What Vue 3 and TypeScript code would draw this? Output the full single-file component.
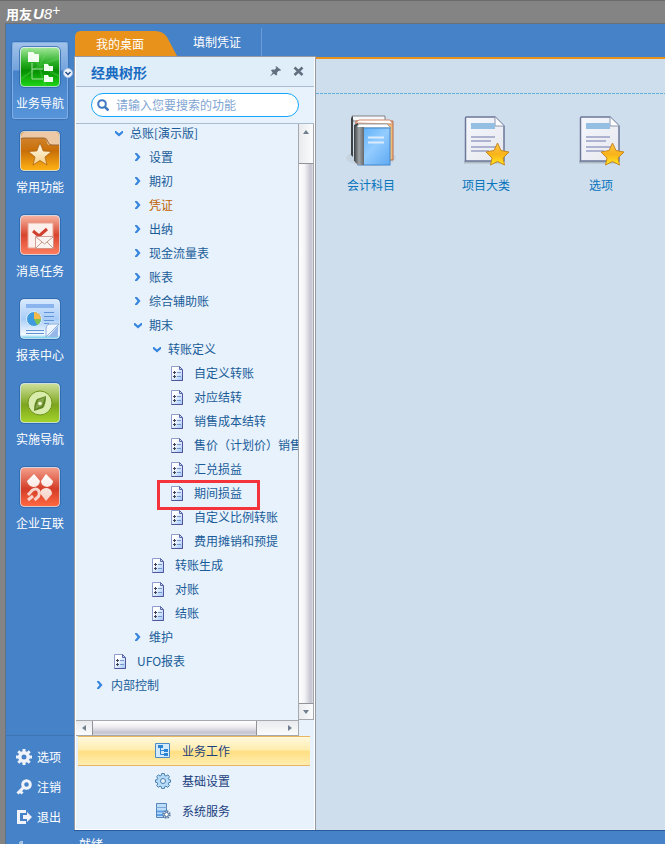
<script setup lang="ts">
import { ref } from 'vue'

interface NavItem { id: string; label: string }
interface TreeRow { label: string; level: number; kind: 'open' | 'closed' | 'leaf'; tone?: 'warm'; marked?: boolean }

const navItems: NavItem[] = [
  { id: 'business', label: '业务导航' },
  { id: 'common', label: '常用功能' },
  { id: 'message', label: '消息任务' },
  { id: 'report', label: '报表中心' },
  { id: 'guide', label: '实施导航' },
  { id: 'connect', label: '企业互联' },
]
const toolItems: NavItem[] = [
  { id: 'options', label: '选项' },
  { id: 'logoff', label: '注销' },
  { id: 'exit', label: '退出' },
]
const tabs = ['我的桌面', '填制凭证']
const rows: TreeRow[] = [
  { label: '总账[演示版]', level: 1, kind: 'open' },
  { label: '设置', level: 2, kind: 'closed' },
  { label: '期初', level: 2, kind: 'closed' },
  { label: '凭证', level: 2, kind: 'closed', tone: 'warm' },
  { label: '出纳', level: 2, kind: 'closed' },
  { label: '现金流量表', level: 2, kind: 'closed' },
  { label: '账表', level: 2, kind: 'closed' },
  { label: '综合辅助账', level: 2, kind: 'closed' },
  { label: '期末', level: 2, kind: 'open' },
  { label: '转账定义', level: 3, kind: 'open' },
  { label: '自定义转账', level: 4, kind: 'leaf' },
  { label: '对应结转', level: 4, kind: 'leaf' },
  { label: '销售成本结转', level: 4, kind: 'leaf' },
  { label: '售价（计划价）销售', level: 4, kind: 'leaf' },
  { label: '汇兑损益', level: 4, kind: 'leaf' },
  { label: '期间损益', level: 4, kind: 'leaf', marked: true },
  { label: '自定义比例转账', level: 4, kind: 'leaf' },
  { label: '费用摊销和预提', level: 4, kind: 'leaf' },
  { label: '转账生成', level: 3, kind: 'leaf' },
  { label: '对账', level: 3, kind: 'leaf' },
  { label: '结账', level: 3, kind: 'leaf' },
  { label: '维护', level: 2, kind: 'closed' },
  { label: 'UFO报表', level: 1, kind: 'leaf' },
  { label: '内部控制', level: 0, kind: 'closed' },
]
const sections: NavItem[] = [
  { id: 'work', label: '业务工作' },
  { id: 'base', label: '基础设置' },
  { id: 'service', label: '系统服务' },
]
const shortcuts = [
  { id: 'books', label: '会计科目' },
  { id: 'page', label: '项目大类' },
  { id: 'page', label: '选项' },
]

const activeNav = ref('business')
const activeTab = ref(0)
const activeSection = ref('work')
const query = ref('')
</script>

<template>
  <div class="window">
    <svg class="defs" aria-hidden="true">
      <defs>
        <linearGradient id="g-business" x2="0" y2="1"><stop offset="0" stop-color="#a5e89c" /><stop offset=".4" stop-color="#27ad22" /><stop offset=".6" stop-color="#078f04" /><stop offset="1" stop-color="#1fd616" /></linearGradient>
        <linearGradient id="g-common" x2="0" y2="1"><stop offset="0" stop-color="#d48b3c" /><stop offset=".5" stop-color="#c96f08" /><stop offset="1" stop-color="#ffb414" /></linearGradient>
        <linearGradient id="g-message" x2="0" y2="1"><stop offset="0" stop-color="#f7b5a2" /><stop offset=".5" stop-color="#d8452e" /><stop offset="1" stop-color="#ff7f60" /></linearGradient>
        <linearGradient id="g-report" x2="0" y2="1"><stop offset="0" stop-color="#d8e9fd" /><stop offset=".5" stop-color="#a9cdf8" /><stop offset=".9" stop-color="#f4fbff" /><stop offset="1" stop-color="#60c7e8" /></linearGradient>
        <linearGradient id="g-guide" x2="0" y2="1"><stop offset="0" stop-color="#cfe09c" /><stop offset=".55" stop-color="#7da51d" /><stop offset="1" stop-color="#a4d42b" /></linearGradient>
        <linearGradient id="g-connect" x2="0" y2="1"><stop offset="0" stop-color="#f4a18d" /><stop offset=".55" stop-color="#d43d27" /><stop offset="1" stop-color="#ff6941" /></linearGradient>
        <linearGradient id="g-white" x2="0" y2="1"><stop offset="0" stop-color="#fff" /><stop offset="1" stop-color="#f5cfc3" /></linearGradient>
        <linearGradient id="g-star" x2="0" y2="1"><stop offset="0" stop-color="#fffdf2" /><stop offset="1" stop-color="#f6cf85" /></linearGradient>
        <linearGradient id="g-gold" x2="0" y2="1"><stop offset="0" stop-color="#ffc94a" /><stop offset=".5" stop-color="#f9b21a" /><stop offset="1" stop-color="#ffe91e" /></linearGradient>
        <linearGradient id="g-sheet" x2="1" y2="1"><stop offset="0" stop-color="#f4f7fd" /><stop offset="1" stop-color="#e6e8ee" /></linearGradient>
        <linearGradient id="g-book" x2="1" y2="1"><stop offset="0" stop-color="#58adf7" /><stop offset=".5" stop-color="#93ccff" /><stop offset="1" stop-color="#5fa9f2" /></linearGradient>
        <linearGradient id="g-spine"><stop offset="0" stop-color="#4f5254" /><stop offset=".45" stop-color="#a1a4a6" /><stop offset="1" stop-color="#65686b" /></linearGradient>
        <linearGradient id="g-doc" x2="1" y2="1"><stop offset=".3" stop-color="#fff" /><stop offset="1" stop-color="#9dc6fa" /></linearGradient>
      </defs>
    </svg>

    <header class="titlebar">
      <span class="brand">用友</span><span class="brand-u">U</span><span class="brand-8">8</span><span class="brand-plus">+</span>
    </header>

    <div class="body">
      <aside class="sidebar">
        <nav class="nav">
          <button v-for="n in navItems" :key="n.id" type="button" class="nav-item" :class="{ active: activeNav === n.id }" @click="activeNav = n.id">
            <svg class="nav-icon" viewBox="0 0 42 42" aria-hidden="true">
              <rect x=".5" y=".5" width="41" height="41" rx="4.5" fill="none" stroke="#2b64a6" stroke-opacity=".7" />
              <rect x="1.5" y="1.5" width="39" height="39" rx="3.5" :fill="`url(#g-${n.id})`" stroke="#fff" stroke-opacity=".6" />
              <g v-if="n.id === 'business'">
                <path d="M20 20L10 2M20 20L30 2M20 20L40 12M20 20L40 30M20 20L26 40M20 20L2 33" stroke="#6de463" stroke-opacity=".25" stroke-width="2" />
                <path d="M13 17V33H24M13 23H24" fill="none" stroke="#a4dda0" />
                <path d="M9 6h5l2 2h4v8H9zM25 18h4l1 2h4v5h-9zM25 29h4l1 2h4v5h-9z" fill="#f2fff0" />
              </g>
              <g v-else-if="n.id === 'common'">
                <path d="M2 7q0-5 5-5h29q4 0 4 4v9h-9q-3 0-3-3-1-4-4-4H2z" fill="#edc9a6" />
                <path d="M2 9q1-1 3-1h20q3 0 4 4 1 3 4 3h7" fill="none" stroke="#9a6836" />
                <path d="M21 13l3.200 8 8.300.5-6.500 5.500 2 8-7-4.500-7 4.500 2-8-6.500-5.500 8.300-.5z" fill="url(#g-star)" stroke="#a65c0c" stroke-width=".7" />
              </g>
              <g v-else-if="n.id === 'message'">
                <path d="M9 9h25v25H9z" fill="#fdf0ec" stroke="#e8a291" />
                <path d="M14 17l6 5L28 15" fill="none" stroke="#d0402f" stroke-width="3" />
                <path d="M16.500 22.500h18v12h-18z" fill="#fbf3f0" stroke="#c8897b" stroke-width=".8" />
                <path d="M17 23l8.500 7 8.500-7M17 34l6-6m11 6-6-6" fill="none" stroke="#c59a90" />
              </g>
              <g v-else-if="n.id === 'report'">
                <path d="M7 6h28v4H7z" fill="#8ab4ee" />
                <circle cx="15" cy="21" r="7.5" fill="#3f9ae0" stroke="#dceefa" />
                <path d="M15 21v-7a7 7 0 0 1 7 7z" fill="#f6ba4a" /><path d="M15 21h7a7 7 0 0 1-4 6z" fill="#80c44f" />
                <path d="M25 14.500h10M25 18.500h10M25 22.500h10M25 25.500h5M7 32.500h18M7 35.500h18" stroke="#5f93d6" />
                <path d="M27 39V31q0-5 5-5h8z" fill="#eef5ff" stroke="#90afd8" />
                <path d="M39 28v11H29z" fill="#96b7e8" />
              </g>
              <g v-else-if="n.id === 'guide'">
                <circle cx="21" cy="21" r="12" fill="#d9ecab" stroke="#6e941d" />
                <path d="M27 14q0 8-3 12l-9 3q0-8 3-12z" fill="#5d8221" />
                <path d="M26 15l-7 3-3 9 7-3z" fill="#86a64a" /><circle cx="21" cy="21.500" r="1.800" fill="#eef8d0" />
              </g>
              <g v-else fill="url(#g-white)">
                <path d="M15 8l6 7q-1 6-7 6-5-1-6-6zM27 8l7 7q0 5-6 6-6-1-6-6zM27 35l-6-8q1-5 7-5 5 1 5 6z" />
                <path d="M9 29l4-4.500q4-3 6.500 0 2 4-1 7l-3 2.500" fill="none" stroke="#f8d5cc" stroke-width="3" />
                <path d="M9 34l5-4" stroke="#f8d5cc" stroke-width="3" />
              </g>
            </svg>
            <span class="nav-label">{{ n.label }}</span>
            <svg v-if="n.id === 'business'" class="nav-more" viewBox="0 0 10 10" aria-hidden="true"><circle cx="5" cy="5" r="4.5" fill="#eef4fc" stroke="#a4bee0" /><path d="M2.500 4L5 6.500 7.500 4" fill="none" stroke="#274f86" stroke-width="1.500" /></svg>
          </button>
        </nav>
        <div class="tools">
          <button v-for="t in toolItems" :key="t.id" type="button" class="tool">
            <svg class="tool-icon" viewBox="0 0 16 16" aria-hidden="true">
              <g v-if="t.id === 'options'"><circle cx="8" cy="8" r="4.2" fill="none" stroke="#f0f4fa" stroke-width="3.4" /><path d="M8 0v3M8 13v3M0 8h3M13 8h3M2.300 2.300l2 2M11.700 11.700l2 2M13.700 2.300l-2 2M4.300 11.700l-2 2" stroke="#f0f4fa" stroke-width="3" /></g>
              <g v-else-if="t.id === 'logoff'" fill="none" stroke="#f0f4fa" stroke-width="3"><circle cx="10.500" cy="5.500" r="3.800" /><path d="M7.500 8.500L1.500 14.500M3.500 11.500l3 3" /></g>
              <g v-else><path d="M10 2.500H2.500v11H10" fill="none" stroke="#f0f4fa" stroke-width="3" /><path d="M7 6h4V3l5 5-5 5v-3H7z" fill="#f0f4fa" /></g>
            </svg>
            <span>{{ t.label }}</span>
          </button>
        </div>
      </aside>

      <main class="main">
        <nav class="tabs">
          <button v-for="(t, i) in tabs" :key="t" type="button" class="tab" :class="{ current: activeTab === i }" @click="activeTab = i">{{ t }}</button>
        </nav>
        <div class="content">
          <section class="panel">
            <header class="panel-head">
              <h1 class="panel-title">经典树形</h1>
              <button type="button" class="head-button" aria-label="固定"><svg viewBox="0 0 11 11"><path d="M6 0l5 4-1 1-1-.5-2 2 .2 2-1 1L3.800 7.800 0 10.500l2.700-4L1 4.500l1-1 2.500.2 2-2L5.500 1z" fill="#61707f" /></svg></button>
              <button type="button" class="head-button" aria-label="关闭"><svg viewBox="0 0 11 11"><path d="M1.500 1.500l8 7.500M9.500 1.500l-8 7.500" stroke="#61707f" stroke-width="2.600" /></svg></button>
            </header>
            <div class="search-row">
              <label class="search">
                <svg class="search-icon" viewBox="0 0 12 12" aria-hidden="true"><circle cx="5" cy="5" r="3.8" fill="none" stroke="#3f77c0" stroke-width="2" /><path d="M8 8l3.500 3.500" stroke="#3f77c0" stroke-width="2.500" /></svg>
                <input v-model="query" type="text" class="search-input" placeholder="请输入您要搜索的功能" aria-label="搜索功能">
              </label>
            </div>

            <div class="tree-area">
              <ul class="tree">
                <li v-for="row in rows" :key="row.label" class="tree-row" :class="[`level-${row.level}`, { marked: row.marked }]">
                  <button type="button" class="tree-button" :class="{ warm: row.tone === 'warm' }">
                    <svg v-if="row.kind === 'leaf'" class="leaf-icon" viewBox="0 0 13 15" aria-hidden="true"><path d="M.5.5h8l3 3v11H.5z" fill="url(#g-doc)" stroke="#8d9ccc" /><path d="M11.500 4v10.500H.5" fill="none" stroke="#51549b" /><path d="M8.500.5v3h3z" fill="#cbdaf5" stroke="#5a67a8" /><path d="M3 5h1v1h1v1H4v1H3V7H2V6h1zM3 9h1v1h1v1H4v1H3v-1H2v-1h1z" fill="#3d4358" /><path d="M6 6.500h4M6 10.500h4" stroke="#7795cc" /></svg>
                    <svg v-else class="arrow" :class="{ open: row.kind === 'open' }" viewBox="0 0 9 9" aria-hidden="true"><path d="M2 0h2L7.500 4 4 8H2V7L4.500 4 2 1z" fill="#3686df" /></svg>
                    <span>{{ row.label }}</span>
                  </button>
                </li>
              </ul>
              <div class="vbar">
                <button type="button" class="bar-button v" aria-label="向上滚动"><svg viewBox="0 0 6 4"><path d="M0 4l3-4 3 4z" fill="#71808e" /></svg></button>
                <div class="vtrack"><div class="vthumb"></div></div>
                <button type="button" class="bar-button v" aria-label="向下滚动"><svg viewBox="0 0 6 4"><path d="M0 0l3 4 3-4z" fill="#71808e" /></svg></button>
              </div>
            </div>
            <div class="hbar">
              <button type="button" class="bar-button h" aria-label="向左滚动"><svg viewBox="0 0 4 6"><path d="M4 0L0 3l4 3z" fill="#71808e" /></svg></button>
              <div class="htrack"><div class="hthumb"></div></div>
              <button type="button" class="bar-button h" aria-label="向右滚动"><svg viewBox="0 0 4 6"><path d="M0 0l4 3-4 3z" fill="#71808e" /></svg></button>
            </div>

            <nav class="sections">
              <button v-for="s in sections" :key="s.id" type="button" class="section" :class="{ selected: activeSection === s.id }" @click="activeSection = s.id">
                <svg class="section-icon" viewBox="0 0 16 16" aria-hidden="true">
                  <g v-if="s.id === 'work'"><path d="M.5.5h14v14H.5z" fill="#d3eafc" stroke="#4d8bc7" /><path d="M3 2h5v3H3zM9 6h4v3H9zM9 10h4v3H9z" fill="#2d83d4" /><path d="M5.500 4v7.500H10M5.500 7.500H10" fill="none" stroke="#2d83d4" /></g>
                  <g v-else-if="s.id === 'base'"><path d="M6.700.5h2.600l.4 2 1.300.5 1.800-1.200 1.700 1.800L13.300 5.400l.5 1.200 1.700.3v2.300l-1.700.4-.5 1.300 1.100 1.600-1.700 1.800-1.700-1.100-1.300.5-.4 1.800H6.700l-.4-1.800L5 13.200l-1.600 1.100-1.800-1.700L2.700 11l-.5-1.400-1.700-.4V6.900l1.700-.3.5-1.300L1.700 3.600l1.700-1.800L5 3l1.300-.5z" fill="#b5dbf8" stroke="#4a7fae" /><circle cx="8" cy="8" r="2.5" fill="#e7f1fb" stroke="#4a7fae" /></g>
                  <g v-else><path d="M1.500.5h10v14h-10z" fill="#bcdefa" stroke="#5686bb" /><path d="M1.500 4.500h10" stroke="#7da9d7" /><path d="M2 8.500h9M2 12h9" stroke="#5d9fe6" stroke-width="2" /><circle cx="11.500" cy="11.500" r="3.2" fill="#e8f3fc" stroke="#56779b" stroke-width="2" stroke-dasharray="1.500 1" /><circle cx="11.500" cy="11.500" r="2" fill="#fff" stroke="#56779b" /></g>
                </svg>
                <span>{{ s.label }}</span>
              </button>
            </nav>
          </section>

          <section class="workspace">
            <div class="toolbar"></div>
            <div class="shortcuts">
              <a v-for="c in shortcuts" :key="c.label" href="#" class="shortcut">
                <svg v-if="c.id === 'books'" class="shortcut-icon" viewBox="0 0 50 52" aria-hidden="true">
                  <ellipse cx="25" cy="43" rx="25" ry="8" fill="#b8c3cf" opacity=".4" />
                  <path d="M6 1h33v5H7z" fill="#f6f8fa" stroke="#7e8386" /><path d="M5 3l2-2v41l-2-2z" fill="#3f4346" />
                  <path d="M10 6h37v39H12z" fill="#efbc77" stroke="#ba6a50" /><path d="M9 8l4-3h31l3 4z" fill="#fff" stroke="#cf866a" />
                  <path d="M8 10l4-2v40l-4-2z" fill="#45494c" />
                  <path d="M10 13l3-4h28l4 4z" fill="#fff" stroke="#9aa5b0" />
                  <rect x="12" y="13" width="32" height="37" fill="url(#g-book)" stroke="#4388cc" /><path d="M9 12h9v38h-6l-3-3z" fill="url(#g-spine)" />
                  <path d="M22 22.500h16M22 27.500h16" stroke="#d9ebfb" stroke-width="2" />
                </svg>
                <svg v-else class="shortcut-icon" viewBox="0 0 50 52" aria-hidden="true">
                  <path d="M3 47h37" stroke="#9ba5b0" stroke-width="3" opacity=".6" />
                  <path d="M4.500 3q0-1 1-1H34l9 9v35H4.500z" fill="url(#g-sheet)" stroke="#6c7799" stroke-width="1.500" />
                  <path d="M34 2v9h9" fill="#fff" stroke="#8994ad" /><path d="M10 8h24v6H10z" fill="#94bfe3" />
                  <path d="M10 22h24M10 26h20M10 32h26M10 36h18" stroke="#aeb3cf" stroke-width="2" />
                  <path d="M36.500 28l3.500 7.500 8 1.500-6 6 1.500 7-7-3.500-7 3.500 1.500-7-6-6 8-1.500z" fill="url(#g-gold)" stroke="#c68723" stroke-linejoin="round" />
                </svg>
                <span>{{ c.label }}</span>
              </a>
            </div>
          </section>
        </div>
      </main>
    </div>

    <footer class="status">
      <svg class="status-icon" viewBox="0 0 12 12" aria-hidden="true"><path d="M3 0v12M0 3l3-3M8 3v7l4-3" fill="none" stroke="#a9c4e6" stroke-width="2" /></svg>
      <span>就绪</span>
    </footer>
  </div>
</template>

<style>
body { margin: 0; background: #848484; }
</style>

<style scoped>
* { box-sizing: border-box; }
button { margin: 0; padding: 0; border: 0; background: none; font: inherit; color: inherit; cursor: pointer; }
svg { display: block; flex: none; }
.window { display: flex; flex-direction: column; min-height: 100vh; background: #848484; font-family: "Noto Sans CJK SC", sans-serif; font-size: 12px; line-height: 16px; color: #1a5c99; }
.defs { position: absolute; width: 0; height: 0; }
.titlebar { display: flex; align-items: center; height: 23px; padding: 4px 0 0 6px; border-top: 1px solid #6b6b6b; color: #fff; }
.brand { font-size: 13px; font-weight: 700; }
.brand-u, .brand-8, .brand-plus { font-family: "Liberation Sans", sans-serif; font-style: italic; }
.brand-u { margin-left: 1px; font-size: 15px; font-weight: 700; }
.brand-8 { font-size: 15px; }
.brand-plus { align-self: flex-start; font-size: 14px; font-style: normal; line-height: 10px; }
.body { display: flex; flex: 1; margin-left: 5px; border-top: 1px solid #6c7078; border-left: 1px solid #5f7287; background: #4682c8; }

.sidebar { display: flex; flex-direction: column; justify-content: space-between; flex: none; width: 68px; color: #fff; }
.nav { display: flex; flex-direction: column; gap: 7px; padding: 18px 6px 0; }
.nav-item { position: relative; display: flex; flex-direction: column; align-items: center; gap: 7px; height: 77px; padding-top: 4px; border-radius: 3px; }
.nav-item.active { background: linear-gradient(#a3c3ea, #73a3dc 36%, #4682c8 38%, #5795da); box-shadow: inset 0 0 0 1px #7eaee5, 0 0 2px #28568e; }
.nav-icon { width: 42px; height: 42px; }
.nav-label { white-space: nowrap; }
.nav-more { position: absolute; right: -5px; top: 26px; width: 10px; height: 10px; }
.tools { display: flex; flex-direction: column; gap: 2px; padding: 7px 0 0 10px; border-top: 1px solid #3c74b6; }
.tool { display: flex; align-items: center; gap: 5px; height: 28px; }
.tool-icon { width: 16px; height: 16px; }

.main { display: flex; flex: 1; flex-direction: column; min-width: 0; }
.tabs { display: flex; align-items: flex-end; height: 32px; padding-left: 1px; color: #fff; }
.tab { height: 28px; padding: 0 20px 0 16px; border-right: 1px solid #6a9bd6; line-height: 28px; }
.tab.current { width: 102px; height: 25px; padding: 0 12px 0 0; border: 0; line-height: 24px; background: #e8921c; clip-path: path("M0 25V6Q0 0 6 0H80Q88 0 92 6L102 25Z"); }
.content { display: flex; flex: 1; border-bottom: 1px solid #275b9d; }
.panel { display: flex; flex: none; flex-direction: column; width: 242px; padding: 0 1px 4px; border: solid #969aa0; border-width: 1px 1px 0; background: #e7f2fc; box-shadow: inset 0 0 0 1px #fff; }
.panel-head { display: flex; align-items: center; gap: 12px; height: 30px; padding: 0 10px 0 15px; border-bottom: 1px solid #a8bdd2; background: #e0eef9; }
.panel-title { flex: 1; margin: 0; font-size: 14px; line-height: 18px; color: #196bc2; }
.head-button svg { width: 11px; height: 11px; }
.search-row { height: 37px; padding: 6px 15px 6px; border-bottom: 1px solid #a8bdd2; }
.search { display: flex; align-items: center; height: 24px; padding: 0 5px; border: 1px solid #15a5fa; border-radius: 12px; background: #fff; }
.search-icon { width: 12px; height: 12px; }
.search-input { flex: 1; min-width: 0; margin-left: 7px; padding: 0; border: 0; outline: 0; background: none; font: inherit; color: #1a5c99; }
.search-input::placeholder { color: #7fa5d3; opacity: 1; }

.tree-area { display: flex; flex: 1; }
.tree { flex: 1; min-width: 0; margin: 0; padding: 0; overflow: hidden; list-style: none; }
.tree-row { position: relative; height: 24px; padding-left: 19px; }
.tree-row:first-child { margin-top: -3px; }
.level-1 { padding-left: 38px; }
.level-2 { padding-left: 57px; }
.level-3 { padding-left: 76px; }
.level-4 { padding-left: 95px; }
.tree-button { display: flex; align-items: center; height: 24px; white-space: nowrap; }
.warm { color: #bf6100; }
.leaf-icon { width: 13px; height: 15px; margin-right: 10px; }
.arrow { width: 9px; height: 9px; margin-right: 7px; }
.arrow.open { transform: rotate(90deg); }
.marked { z-index: 1; }
.marked::after { position: absolute; top: -1px; left: 81px; box-sizing: border-box; width: 103px; height: 30px; border: 3px solid #f5333b; content: ""; pointer-events: none; }
.vbar { display: flex; flex: none; flex-direction: column; width: 16px; border: solid #a5a8ac; border-width: 0 1px 1px; background: linear-gradient(90deg, #e9ebee, #fafbfc); }
.bar-button { display: flex; align-items: center; justify-content: center; }
.bar-button.v { height: 15px; }
.bar-button.v svg { width: 6px; height: 4px; }
.vtrack { flex: 1; padding-top: 24px; }
.vthumb { height: 100%; border: solid #909398; border-width: 1px 0; background: linear-gradient(90deg, #fff, #f3f3f6 40%, #c3c2cf 85%, #dedee6); }
.hbar { display: flex; flex: none; height: 16px; margin-right: 15px; border: solid #a5a8ac; border-width: 1px 1px 1px 0; background: linear-gradient(#e9ebee, #fafbfc); }
.bar-button.h { width: 16px; }
.bar-button.h svg { width: 4px; height: 6px; }
.htrack { flex: 1; padding-right: 25px; }
.hthumb { height: 100%; border: solid #909398; border-width: 0 1px; background: linear-gradient(#fff, #eeeef2 40%, #c3c2cf 85%, #dedee6); }
.sections { display: flex; flex-direction: column; padding: 0 4px 0 2px; }
.section { display: flex; align-items: center; gap: 11px; height: 30px; padding-left: 77px; color: #1d3f7e; }
.section.selected { border: solid #e9b562; border-width: 1px 0; background: linear-gradient(#fff9dc, #ffedb0 45%, #ffdf82 52%, #ffedb0); }
.section-icon { width: 16px; height: 16px; }

.workspace { flex: 1; min-width: 0; margin-top: 1px; border-top: 2px solid #e8921c; background: #cfdeec; }
.toolbar { height: 35px; background: repeating-linear-gradient(90deg, #5db1e3 0 3px, transparent 3px 4px) bottom / 100% 1px no-repeat; }
.shortcuts { display: flex; flex-wrap: wrap; gap: 15px; padding: 21px 0 0 5px; }
.shortcut { display: flex; flex-direction: column; align-items: center; gap: 10px; width: 100px; color: #0875bd; text-decoration: none; }
.shortcut-icon { width: 50px; height: 52px; }
.status { display: flex; gap: 48px; height: 13px; margin-left: 5px; padding: 5px 0 0 13px; overflow: hidden; border-left: 1px solid #5f7287; background: #4682c8; color: #fff; }
.status-icon { width: 12px; height: 12px; margin-top: 5px; }
</style>
